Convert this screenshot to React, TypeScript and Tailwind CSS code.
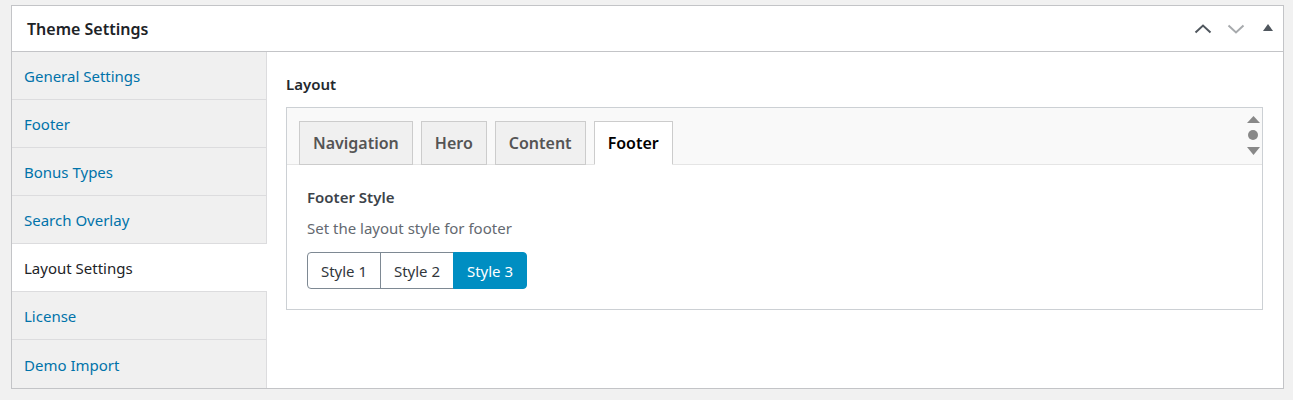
import { useState } from "react";

const MENU = ["General Settings", "Footer", "Bonus Types", "Search Overlay", "Layout Settings", "License", "Demo Import"];
const TABS = ["Navigation", "Hero", "Content", "Footer"];
const STYLES = ["Style 1", "Style 2", "Style 3"];

export default function App() {
  const [active] = useState("Layout Settings");
  const [tab, setTab] = useState("Footer");
  const [style, setStyle] = useState("Style 3");

  return (
    <div className="min-h-[400px] bg-[#f1f1f1] pl-[11px] pr-[9px] pt-[5px] font-['Noto_Sans',sans-serif] text-[15px] leading-[20px]">
      <div className="border border-[#c3c4c7] bg-white">
        {/* Header */}
        <div className="flex h-[46px] items-center justify-between border-b border-[#c3c4c7] pl-[15px] pr-[10px]">
          <h2 className="text-[16px] font-semibold text-[#1d2327]">Theme Settings</h2>
          <div className="flex items-center">
            <svg width="18" height="10" viewBox="0 0 18 10" className="mr-[15px]">
              <path d="M1.5 8.5 9 1.5l7.5 7" fill="none" stroke="#50575e" strokeWidth="2" />
            </svg>
            <svg width="18" height="10" viewBox="0 0 18 10" className="mr-[18px]">
              <path d="M1.5 1.5 9 8.5l7.5-7" fill="none" stroke="#a7aaad" strokeWidth="2" />
            </svg>
            <svg width="10" height="7" viewBox="0 0 10 7" className="mb-[2px]">
              <path d="M0 7 5 0l5 7z" fill="#50575e" />
            </svg>
          </div>
        </div>

        <div className="flex">
          {/* Sidebar */}
          <ul className="w-[255px] shrink-0 bg-[#f0f0f0]">
            {MENU.map((m) => (
              <li
                key={m}
                className={`flex h-[48px] items-center border-b border-[#dcdcde] pl-3 pt-px last:border-b-0 ${
                  m === active ? "bg-white text-[#1d2327]" : "border-r border-r-[#dcdcde] text-[#0073aa]"
                }`}
              >
                {m}
              </li>
            ))}
          </ul>

          {/* Content */}
          <div className="flex-1 pl-[19px] pr-[20px] pt-[22px]">
            <h3 className="mb-[13px] font-semibold text-[#23282d]">Layout</h3>
            <div className="border border-[#ccd0d4]">
              <div className="flex h-[57px] border-b border-[#e5e5e5] bg-[#f9f9f9]">
                <div className="flex flex-1 items-end gap-[8px] pl-[12px]">
                  {TABS.map((t) => (
                    <button
                      key={t}
                      onClick={() => setTab(t)}
                      className={`-mb-px h-[44px] border border-[#ccc] px-[13px] text-[16px] font-semibold ${
                        t === tab ? "border-b-white bg-white text-black" : "bg-[#f0f0f0] text-[#555]"
                      }`}
                    >
                      {t}
                    </button>
                  ))}
                </div>
                <div className="flex w-[20px] flex-col items-center gap-[7px] pl-[2px] pt-[8px]">
                  <svg width="13" height="7" viewBox="0 0 13 7">
                    <path d="M0 7 6.5 0 13 7z" fill="#888" />
                  </svg>
                  <svg width="10" height="10" viewBox="0 0 10 10">
                    <circle cx="5" cy="5" r="5" fill="#888" />
                  </svg>
                  <svg width="13" height="8" viewBox="0 0 13 8">
                    <path d="M0 0h13L6.5 8z" fill="#888" />
                  </svg>
                </div>
              </div>
              <div className="px-[20px] pb-[20px] pt-[22px]">
                <h4 className="font-semibold text-[#3c434a]">Footer Style</h4>
                <p className="mt-[11px] text-[#646970]">Set the layout style for footer</p>
                <div className="mt-[14px] flex">
                  {STYLES.map((s, i) => (
                    <button
                      key={s}
                      onClick={() => setStyle(s)}
                      className={`h-[37px] w-[74px] border text-[15px] ${i === 0 ? "rounded-l-[4px]" : "-ml-px"} ${
                        i === STYLES.length - 1 ? "rounded-r-[4px]" : ""
                      } ${s === style ? "relative border-[#008ec2] bg-[#008ec2] text-white" : "border-[#7e8993] bg-white text-[#32373c]"}`}
                    >
                      {s}
                    </button>
                  ))}
                </div>
              </div>
            </div>
          </div>
        </div>
      </div>
    </div>
  );
}
